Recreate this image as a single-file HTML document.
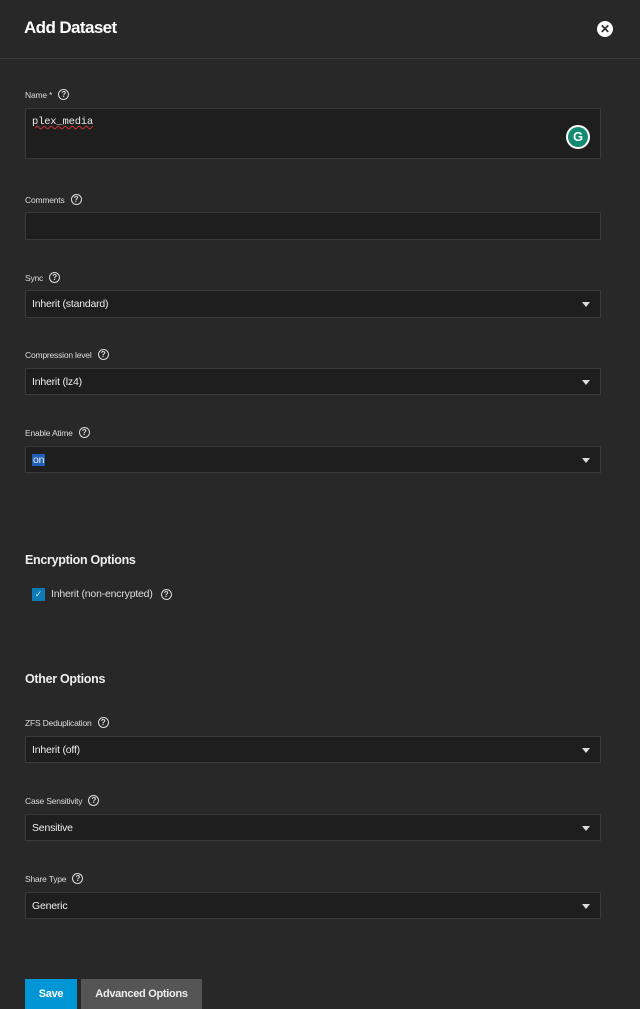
<!DOCTYPE html>
<html><head><style>
*{box-sizing:border-box;margin:0;padding:0}
body{width:640px;height:1009px;background:#282828;font-family:"Liberation Sans",sans-serif;color:#fff;position:relative;overflow:hidden}
.a{position:absolute}
.hdr{left:0;top:0;width:640px;height:59px;border-bottom:1px solid #3a3a3a}
.title{left:24px;top:18px;font-size:17px;font-weight:bold;letter-spacing:-0.6px}
.lbl{left:25px;font-size:8.5px;color:#ddd;display:flex;align-items:center;gap:6px;letter-spacing:-0.2px}
.q{width:11px;height:11px;border:1.3px solid #ddd;border-radius:50%;font-size:8px;line-height:9px;text-align:center;font-weight:bold;color:#ddd}
.box{left:25px;width:576px;background:#1e1e1e;border:1px solid #3a3a3a;font-size:10.5px;color:#eee;padding-left:6px;display:flex;align-items:center;letter-spacing:-0.2px}
.arr{position:absolute;right:10px;top:50%;margin-top:-2px;border-left:4.5px solid transparent;border-right:4.5px solid transparent;border-top:5px solid #ddd}
.h{left:25px;font-size:12.5px;font-weight:bold;color:#eee;letter-spacing:-0.3px}
</style></head><body>
<div class="a hdr"></div>
<div class="a title">Add Dataset</div>
<div class="a" style="left:597px;top:21px;width:16px;height:16px;border-radius:50%;background:#fff;color:#282828;font-size:12px;font-weight:bold;text-align:center;line-height:16px">✕</div>

<div class="a lbl" style="top:89px">Name *<span class="q">?</span></div>
<div class="a box" style="top:108px;height:51px;align-items:flex-start;padding-top:7px;font-family:'Liberation Mono',monospace;font-size:10.5px"><span style="text-decoration:underline wavy #c33;text-decoration-thickness:1px">plex_media</span></div>
<div class="a" style="left:566px;top:125px;width:24px;height:24px;border-radius:50%;background:#fff;"></div>
<div class="a" style="left:568px;top:127px;width:20px;height:20px;border-radius:50%;background:#138a72;color:#fff;font-size:13px;font-weight:bold;text-align:center;line-height:20px">G</div>

<div class="a lbl" style="top:194px">Comments<span class="q">?</span></div>
<div class="a box" style="top:212px;height:28px"></div>

<div class="a lbl" style="top:272px">Sync<span class="q">?</span></div>
<div class="a box" style="top:290px;height:28px">Inherit (standard)<span class="arr"></span></div>

<div class="a lbl" style="top:349px">Compression level<span class="q">?</span></div>
<div class="a box" style="top:368px;height:27px">Inherit (lz4)<span class="arr"></span></div>

<div class="a lbl" style="top:427px">Enable Atime<span class="q">?</span></div>
<div class="a box" style="top:446px;height:27px"><span style="background:#1f5fb5;padding:0 1px">on</span><span class="arr"></span></div>

<div class="a h" style="top:553px">Encryption Options</div>
<div class="a" style="left:32px;top:588px;width:13px;height:13px;background:#0e7bb6;color:#cde;font-size:9px;text-align:center;line-height:13px">✓</div>
<div class="a" style="left:51px;top:588px;font-size:10.5px;color:#ddd;display:flex;align-items:center;gap:8px;letter-spacing:-0.2px">Inherit (non-encrypted)<span class="q">?</span></div>

<div class="a h" style="top:672px">Other Options</div>

<div class="a lbl" style="top:717px">ZFS Deduplication<span class="q">?</span></div>
<div class="a box" style="top:736px;height:27px">Inherit (off)<span class="arr"></span></div>

<div class="a lbl" style="top:795px">Case Sensitivity<span class="q">?</span></div>
<div class="a box" style="top:814px;height:27px">Sensitive<span class="arr"></span></div>

<div class="a lbl" style="top:873px">Share Type<span class="q">?</span></div>
<div class="a box" style="top:892px;height:27px">Generic<span class="arr"></span></div>

<div class="a" style="left:25px;top:979px;width:52px;height:30px;background:#0095d5;font-size:11px;font-weight:bold;text-align:center;line-height:30px;letter-spacing:-0.3px">Save</div>
<div class="a" style="left:81px;top:979px;width:121px;height:30px;background:#555;font-size:11px;font-weight:bold;text-align:center;line-height:30px;color:#eee;letter-spacing:-0.3px">Advanced Options</div>
</body></html>
